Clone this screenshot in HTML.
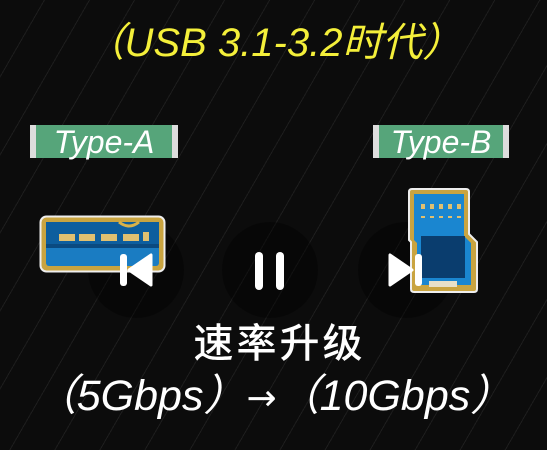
<!DOCTYPE html>
<html><head><meta charset="utf-8"><style>
html,body{margin:0;padding:0}
body{width:547px;height:450px;overflow:hidden;position:relative;background:#0c0c0c;
background-image:repeating-linear-gradient(120deg,transparent 0 38px,rgba(255,255,255,0.07) 38px 39px);
font-family:"Liberation Sans","Noto Sans CJK SC",sans-serif;}
.abs{position:absolute}
.title{left:0;width:547px;top:16px;text-align:center;color:#f4ef3a;font-size:40px;font-style:italic;line-height:54px;letter-spacing:0px}
.lbl{height:33px;background:#56a57a;color:#fff;font-style:italic;font-size:32px;line-height:34px;text-align:center;border-left:6px solid #ddd;border-right:6px solid #ddd;box-sizing:border-box}
.circ{border-radius:50%;background:rgba(0,0,0,0.35);width:96px;height:96px}
.w{color:#fff;text-align:center;left:0;width:547px}
</style></head><body>
<div class="abs title">（USB 3.1-3.2时代）</div>
<div class="abs lbl" style="left:30px;top:125px;width:148px">Type-A</div>
<div class="abs lbl" style="left:373px;top:125px;width:136px">Type-B</div>

<div class="abs circ" style="left:88px;top:222px"></div>
<div class="abs circ" style="left:222px;top:222px"></div>
<div class="abs circ" style="left:358px;top:222px"></div>

<!-- USB-A -->
<svg class="abs" style="left:39px;top:215px" width="128" height="60" viewBox="0 0 128 60">
<rect x="1.5" y="1.5" width="124" height="55" rx="6" fill="#c9a440" stroke="#eee" stroke-width="2"/>
<rect x="7" y="7" width="113" height="44" rx="3" fill="#1a7cc2"/>
<rect x="7" y="7" width="113" height="22" fill="#0d5e9e"/>
<rect x="7" y="29" width="113" height="4" fill="#0a4a80"/>
<path d="M80 7 q10 8 20 0" stroke="#d9b24a" stroke-width="3" fill="none"/>
<g fill="#e0c070"><rect x="20" y="19" width="16" height="7"/><rect x="40" y="19" width="16" height="7"/><rect x="62" y="19" width="16" height="7"/><rect x="84" y="19" width="16" height="7"/><rect x="104" y="17" width="6" height="9"/></g>
</svg>
<!-- USB-B -->
<svg class="abs" style="left:407px;top:188px" width="72" height="106" viewBox="0 0 72 106">
<path d="M2 4 q0-3 3-3 h54 q3 0 3 3 v42 l8 8 v47 q0 3-3 3 h-60 q-3 0-3-3 v-47 l-2-2z" fill="#c9a440" stroke="#eee" stroke-width="2"/>
<path d="M7 6 h50 v42 l7 7 v42 h-54 v-42 l-3-3z" fill="#1a86d0"/>
<path d="M14 48 h44 v42 h-44z" fill="#0a3d6e"/>
<g fill="#e0c070"><rect x="14" y="16" width="4" height="5"/><rect x="23" y="16" width="4" height="5"/><rect x="32" y="16" width="4" height="5"/><rect x="41" y="16" width="4" height="5"/><rect x="50" y="16" width="4" height="5"/></g>
<g fill="#e0c070"><rect x="14" y="28" width="4" height="2"/><rect x="23" y="28" width="4" height="2"/><rect x="32" y="28" width="4" height="2"/><rect x="41" y="28" width="4" height="2"/><rect x="50" y="28" width="4" height="2"/></g>
<rect x="22" y="93" width="28" height="6" fill="#e8e0c8"/>
</svg>

<!-- controls -->
<svg class="abs" style="left:118px;top:252px" width="40" height="36" viewBox="0 0 40 36">
<rect x="2" y="2" width="7" height="32" rx="3" fill="#fff"/>
<path d="M33 3 v30 l-22-15z" fill="#fff" stroke="#fff" stroke-width="3" stroke-linejoin="round"/>
</svg>
<svg class="abs" style="left:253px;top:250px" width="34" height="42" viewBox="0 0 34 42">
<rect x="2" y="2" width="8" height="38" rx="4" fill="#fff"/>
<rect x="23" y="2" width="8" height="38" rx="4" fill="#fff"/>
</svg>
<svg class="abs" style="left:385px;top:252px" width="40" height="36" viewBox="0 0 40 36">
<path d="M5 3 v30 l22-15z" fill="#fff" stroke="#fff" stroke-width="3" stroke-linejoin="round"/>
<rect x="30" y="2" width="7" height="32" rx="3" fill="#fff"/>
</svg>

<div class="abs w" style="top:318px;left:6px;font-size:40px;line-height:52px;letter-spacing:3px;font-weight:500">速率升级</div>
<div class="abs w" style="top:368px;font-size:43px;line-height:56px;font-style:italic;letter-spacing:0px">（5Gbps）<span style="font-style:normal;font-family:'DejaVu Sans',sans-serif;font-size:36px">→</span>（10Gbps）</div>
</body></html>
